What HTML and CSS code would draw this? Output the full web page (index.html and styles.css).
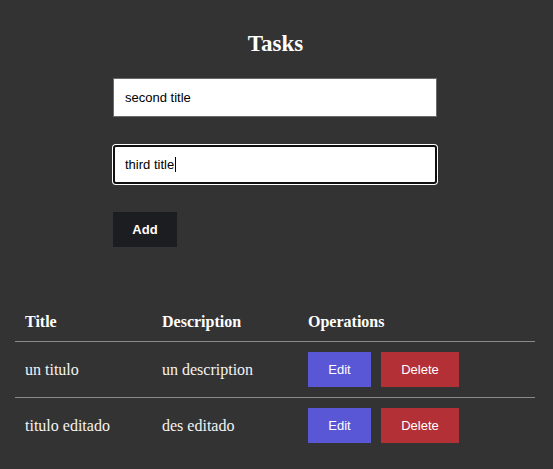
FILE: index.html
```html
<!DOCTYPE html>
<html lang="en">
<head>
<meta charset="utf-8">
<title>Tasks</title>
<link rel="stylesheet" href="styles.css">
</head>
<body>
<main class="page">
  <h1 class="title">Tasks</h1>
  <form class="task-form">
    <input class="field" type="text" value="second title">
    <div class="field-wrap">
      <input class="field field-focused" type="text" value="third title">
      <span class="caret"></span>
    </div>
    <button class="btn btn-add" type="button">Add</button>
  </form>
  <table class="tasks">
    <thead>
      <tr>
        <th class="col-title">Title</th>
        <th class="col-desc">Description</th>
        <th>Operations</th>
      </tr>
    </thead>
    <tbody>
      <tr>
        <td>un titulo</td>
        <td>un description</td>
        <td><div class="ops"><button class="btn btn-edit" type="button">Edit</button><button class="btn btn-delete" type="button">Delete</button></div></td>
      </tr>
      <tr>
        <td>titulo editado</td>
        <td>des editado</td>
        <td><div class="ops"><button class="btn btn-edit" type="button">Edit</button><button class="btn btn-delete" type="button">Delete</button></div></td>
      </tr>
    </tbody>
  </table>
</main>
</body>
</html>
```
FILE: styles.css
```css
html, body {
  margin: 0;
  padding: 0;
  background: #333333;
}

body {
  font-family: "Liberation Serif", "Times New Roman", serif;
  color: #f4f4f4;
}

.page {
  padding: 31px 0 0 0;
}

.title {
  margin: 0;
  text-align: center;
  font-size: 23px;
  line-height: 26px;
  font-weight: bold;
  color: #ffffff;
  padding-right: 2px;
}

.task-form {
  margin: 21px 0 0 113px;
  width: 324px;
  display: flex;
  flex-direction: column;
  align-items: flex-start;
  gap: 28px;
}

.field {
  box-sizing: border-box;
  width: 324px;
  height: 39px;
  margin: 0;
  border: 1px solid #6a6a6a;
  border-radius: 0;
  padding: 0 10px 0 11px;
  background: #ffffff;
  color: #000000;
  font-family: "Liberation Sans", Arial, sans-serif;
  font-size: 13px;
  outline: none;
}

.field-wrap {
  position: relative;
  width: 324px;
  height: 39px;
}

.field-focused {
  border: 2px solid #101010;
  border-radius: 3px;
  padding: 0 9px 0 10px;
  box-shadow: 0 0 0 1px #ffffff;
}

.caret {
  position: absolute;
  left: 62px;
  top: 12px;
  width: 1px;
  height: 15px;
  background: #000000;
}

.btn {
  border: none;
  border-radius: 0;
  margin: 0;
  height: 35px;
  font-family: "Liberation Sans", Arial, sans-serif;
  font-size: 13px;
  color: #ffffff;
  cursor: pointer;
}

.btn-add {
  width: 64px;
  background: #1c1d21;
  font-weight: bold;
}

.tasks {
  margin: 56px 0 0 15px;
  width: 520px;
  border-collapse: collapse;
  font-size: 16px;
}

.tasks th,
.tasks td {
  text-align: left;
  padding: 10px 10px;
  line-height: 18px;
  vertical-align: middle;
}

.tasks th {
  font-weight: bold;
  color: #ffffff;
}

.col-title {
  width: 117px;
}

.col-desc {
  width: 126px;
}

.tasks tbody tr {
  border-top: 1px solid #8a8a8a;
}

.ops {
  display: flex;
  gap: 10px;
}

.btn-edit {
  width: 63px;
  background: #5a57d6;
}

.btn-delete {
  width: 78px;
  background: #b33136;
}
```
